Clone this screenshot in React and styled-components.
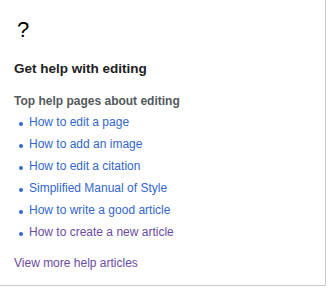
import React from "react";
import styled, { createGlobalStyle } from "styled-components";

const Global = createGlobalStyle`
  html, body { margin: 0; padding: 0; background: #fff; }
  body { font-family: "Liberation Sans", Arial, sans-serif; }
`;

const Panel = styled.div`
  box-sizing: border-box;
  width: 326px;
  height: 286px;
  background: #fff;
  border-right: 1px solid #c8ccd1;
  border-bottom: 1px solid #c8ccd1;
  padding: 16px 0 0 14px;
  display: flex;
  flex-direction: column;
`;

const Icon = styled.div`
  font-size: 22px;
  line-height: 28px;
  color: #000;
  padding-left: 3px;
`;

const Title = styled.h2`
  margin: 16px 0 0;
  font-size: 13.5px;
  line-height: 17px;
  font-weight: bold;
  color: #202122;
`;

const Subtitle = styled.h3`
  margin: 17px 0 0;
  font-size: 12px;
  line-height: 15px;
  font-weight: bold;
  color: #54595d;
`;

const List = styled.ul`
  list-style: none;
  margin: 6px 0 0;
  padding: 0 0 0 5px;
  display: flex;
  flex-direction: column;
  gap: 7px;
`;

const Item = styled.li`
  display: flex;
  align-items: center;
  gap: 6px;
  font-size: 12px;
  line-height: 15px;
`;

const Bullet = styled.span`
  width: 4px;
  height: 4px;
  border-radius: 50%;
  background: #3366cc;
  flex: none;
  margin-top: 2px;
`;

const Link = styled.a`
  color: ${(p) => (p.$visited ? "#6b4ba1" : "#3366cc")};
  text-decoration: none;
`;

const More = styled(Link)`
  margin-top: 16px;
  font-size: 12px;
  line-height: 15px;
`;

const items = [
  ["How to edit a page", false],
  ["How to add an image", false],
  ["How to edit a citation", false],
  ["Simplified Manual of Style", false],
  ["How to write a good article", false],
  ["How to create a new article", true],
];

export default function App() {
  return (
    <>
      <Global />
      <Panel>
        <Icon>?</Icon>
        <Title>Get help with editing</Title>
        <Subtitle>Top help pages about editing</Subtitle>
        <List>
          {items.map(([t, v]) => (
            <Item key={t}>
              <Bullet />
              <Link href="#" $visited={v}>{t}</Link>
            </Item>
          ))}
        </List>
        <More href="#" $visited>View more help articles</More>
      </Panel>
    </>
  );
}
